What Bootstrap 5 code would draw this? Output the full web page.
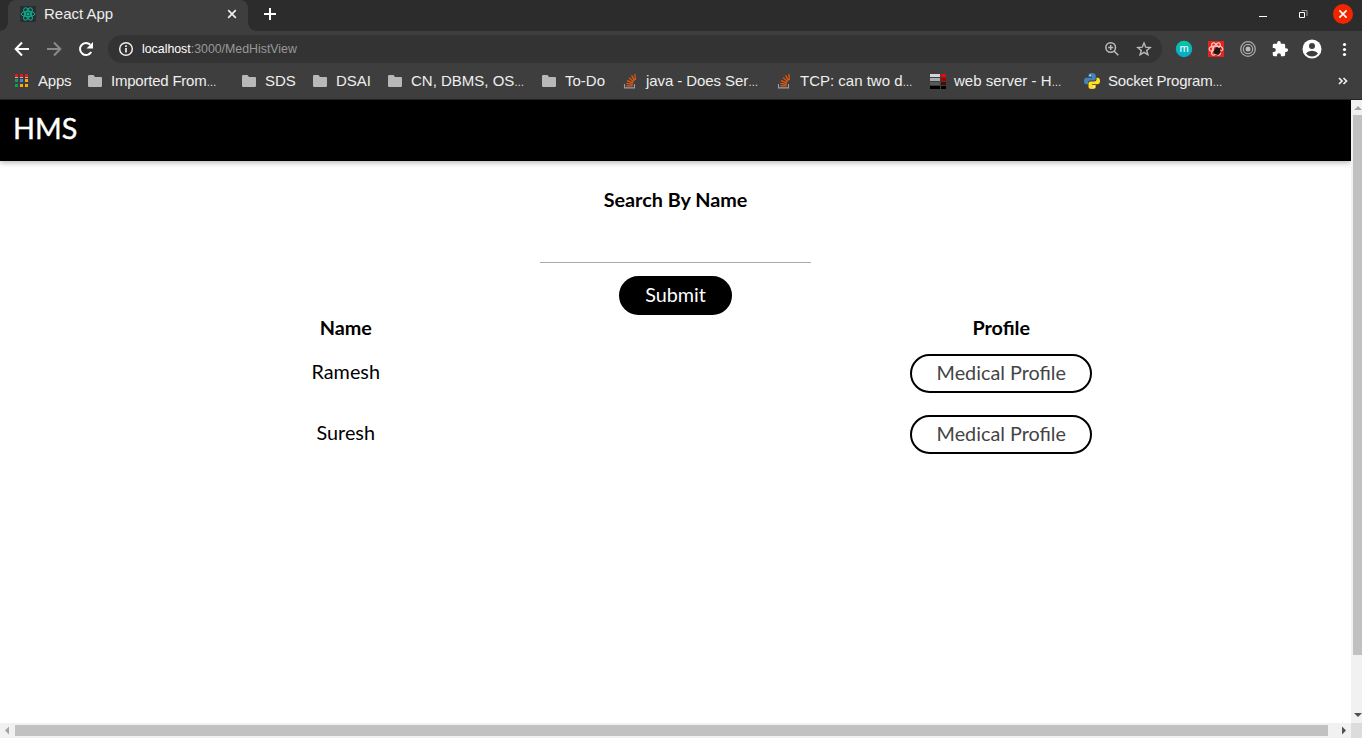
<!DOCTYPE html>
<html lang="en">
<head>
<meta charset="utf-8">
<title>React App</title>
<link rel="stylesheet" href="https://cdn.jsdelivr.net/npm/bootstrap@5.3.0/dist/css/bootstrap.min.css">
<style>
html,body{height:100%}
body{width:1362px;height:738px;font-family:"Liberation Sans",Arial,sans-serif;background:#fff;color:#000}
svg{display:block;flex:none}
/* browser window */
.tabstrip{height:31px;background:#2c2c2c;padding-left:8px}
.tab-active{width:240px;height:31px;background:#3e3e3e;border-radius:8px 8px 0 0;font-size:15px;line-height:18px;color:#eee;padding:0 10px 3px 12px}
.tab-active::before,.tab-active::after{content:"";position:absolute;bottom:0;width:8px;height:8px}
.tab-active::before{left:-8px;background:radial-gradient(circle at 0 0,transparent 7.5px,#3e3e3e 8px)}
.tab-active::after{right:-8px;background:radial-gradient(circle at 100% 0,transparent 7.5px,#3e3e3e 8px)}
.toolbar{height:35px;background:#3e3e3e;padding:0 10px 0 14px}
.omnibox{width:1054px;height:28px;border-radius:14px;background:#333;margin-left:14px;padding:0 10px;font-size:12.35px;color:#999}
.omnibox b{font-weight:400;color:#fff}
.url{padding-top:1px}
.bookmarks{height:34px;background:#3e3e3e;border-bottom:1px solid #242424;display:grid;grid-template-columns:73px 154px 71px 75px 154px 81px 154px 153px 154px 254px 1fr;padding:0 0 3px 15px;font-size:15px;line-height:20px;color:#eee}
.bookmarks>div{display:flex;align-items:center;white-space:nowrap}
.bookmarks svg{margin-right:7px;width:16px;height:16px}
.bookmarks i{font-style:normal;font-size:10px;padding-top:4px}
.tight{letter-spacing:-.22px}
.snug{letter-spacing:-.08px}
/* page */
.viewport{height:638px;display:grid;grid-template-columns:1351px 11px;grid-template-rows:623px 15px}
.page{font-family:Lato,sans-serif;font-size:19.8px;line-height:24px}
.topbar{height:61px;background:#000;box-shadow:0 2px 5px rgba(0,0,0,.26);padding:0 0 6px 13px}
.topbar span{font-size:28.8px;line-height:36px;color:#fff;-webkit-text-stroke:.4px #fff}
.line-input{width:271px;height:39px;border:0;border-bottom:1px solid #aaa;border-radius:0;background:none;padding:0;margin:13px 0 13px}
.pill{height:39px;border-radius:20px;border:2px solid #000;font-size:19.8px;line-height:24px;padding:4px 0 7px;color:#444;--bs-btn-font-family:Lato}
.pill-dark{background:#000;color:#fff;width:113px}
.pill-line{width:182px;background:#fff}
.records{width:1311px;margin-left:18px}
.records .line{height:61px}
.who{padding-top:5px}
.sb{background:#f1f1f1;overflow:hidden}
.thumb{background:#c1c1c1}
</style>
<script src="https://cdn.jsdelivr.net/npm/bootstrap@5.3.0/dist/js/bootstrap.bundle.min.js"></script>
</head>
<body class="overflow-hidden">
<svg width="0" height="0" class="position-absolute">
<symbol id="folder" viewBox="0 0 16 16"><path fill="#b8b8b8" d="M0 3.2Q0 2 1.2 2H5.5L7 4h6Q14 4 14 5v7.8Q14 14 12.8 14H1.2Q0 14 0 12.8z"/></symbol>
<symbol id="stack" viewBox="0 0 16 16"><path d="M1.5 11v3.9h10V11" fill="none" stroke="#9a9caa" stroke-width="1.1"/><path d="M3.3 12.900h6.400M3.400 10.400l6.400 .9M4 7.600l6 2.300M6 4.600l4.800 4.100M8.600 2.400l3 5.200M11.900 1l.5 6" stroke="#e8590c" stroke-width="1.2"/></symbol>
</svg>
<div class="tabstrip d-flex align-items-center">
 <div class="tab-active position-relative d-flex align-items-center">
  <svg width="16" height="16" viewBox="0 0 16 16"><path fill="#282c34" d="M0 0h16v16H0z"/><g fill="none" stroke="#08b58d" stroke-width="1"><ellipse cx="8" cy="8" rx="6.8" ry="2.7"/><ellipse cx="8" cy="8" rx="6.8" ry="2.7" transform="rotate(60 8 8)"/><ellipse cx="8" cy="8" rx="6.8" ry="2.7" transform="rotate(120 8 8)"/></g><circle cx="8" cy="8" r="1.5" fill="#08b58d"/></svg>
  <span class="ms-2 flex-grow-1">React App</span>
  <svg width="12" height="12" viewBox="0 0 12 12"><path d="M2.2 2.2l7.6 7.6M9.8 2.2L2.2 9.8" stroke="#eee" stroke-width="1.7"/></svg>
 </div>
 <svg class="ms-3" style="margin-bottom:3px" width="12" height="12" viewBox="0 0 12 12"><path d="M6 0v12M0 6h12" stroke="#fff" stroke-width="2"/></svg>
 <svg class="ms-auto" width="104" height="31" viewBox="0 0 104 31"><path d="M1 16.5h8" stroke="#fff"/><path d="M43.5 10.5h5.500v5.500" stroke="#999" fill="none"/><path d="M41.500 12.500h5v5h-5z" stroke="#fff" fill="none"/><circle cx="85" cy="14" r="10" fill="#f22500"/><path d="M81.400 10.400l7.200 7.200M88.600 10.400l-7.200 7.200" stroke="#fff" stroke-width="1.6"/></svg>
</div>
<div class="toolbar d-flex align-items-center">
 <svg width="16" height="16" viewBox="0 0 16 16"><path d="M15 8H2.5M8 1.500L1.700 8 8 14.500" fill="none" stroke="#fff" stroke-width="2"/></svg>
 <svg class="ms-3" width="16" height="16" viewBox="0 0 16 16"><path d="M1 8h12.500M8 1.500L14.300 8 8 14.500" fill="none" stroke="#8a8a8a" stroke-width="2"/></svg>
 <svg class="ms-3" width="16" height="16" viewBox="0 0 16 16"><path d="M13.200 11A6 6 0 1 1 12.300 3.800" fill="none" stroke="#fff" stroke-width="2"/><path fill="#fff" d="M15 1v6.500H8.500z"/></svg>
 <div class="omnibox d-flex align-items-center">
  <svg width="16" height="16" viewBox="0 0 16 16"><circle cx="8" cy="8" r="6.3" fill="none" stroke="#eee" stroke-width="1.5"/><path d="M8 7v4.600M8 4.300v1.700" stroke="#eee" stroke-width="1.7"/></svg>
  <span class="ms-2 url"><b>localhost</b>:3000/MedHistView</span>
  <svg class="ms-auto" width="16" height="16" viewBox="0 0 16 16"><circle cx="6.7" cy="6.5" r="4.8" fill="none" stroke="#bbb" stroke-width="1.5"/><path d="M10 10l4.300 4.300M6.700 4v5M4.200 6.500h5" stroke="#bbb" stroke-width="1.5"/></svg>
  <svg class="ms-3" width="16" height="16" viewBox="0 0 16 16"><path d="M8 2l1.700 4.200 4.500.3-3.500 2.900 1.200 4.400L8 11.400l-3.900 2.400 1.200-4.400L1.800 6.500l4.500-.3z" fill="none" stroke="#bbb" stroke-width="1.4"/></svg>
 </div>
 <svg width="190" height="32" viewBox="1162 33 190 32">
  <defs><linearGradient id="teal" x2="0" y2="1"><stop stop-color="#05c5a5"/><stop offset="1" stop-color="#08a9cf"/></linearGradient></defs>
  <circle cx="1184" cy="49" r="8.2" fill="url(#teal)"/><text x="1184" y="52" text-anchor="middle" font-size="11" fill="#fff">m</text>
  <path fill="#e8211b" d="M1208 41h16v16h-16z"/><g fill="none" stroke="#f7c5c2" stroke-width="1.3"><ellipse cx="1216" cy="49" rx="6.8" ry="2.8"/><ellipse cx="1216" cy="49" rx="6.8" ry="2.8" transform="rotate(60 1216 49)"/><ellipse cx="1216" cy="49" rx="6.8" ry="2.8" transform="rotate(120 1216 49)"/></g><path d="M1215 49l2-2 2 1 2-1-1 3 1 2-3 3-3-1-2-2z" fill="#251414"/>
  <g fill="none" stroke="#a8a8a8" stroke-width="1.3"><circle cx="1248" cy="49" r="7.3"/><circle cx="1248" cy="49" r="4.7"/></g><circle cx="1248" cy="49" r="2.5" fill="#bbb"/>
  <path fill="#fff" transform="translate(1271.3 40.2) scale(.73)" d="M20.500 11H19V7a2 2 0 0 0-2-2h-4V3.500a2.500 2.500 0 0 0-5 0V5H4a2 2 0 0 0-2 2v3.800h1.500a2.700 2.700 0 0 1 0 5.400H2V20a2 2 0 0 0 2 2h3.800v-1.500a2.700 2.700 0 0 1 5.400 0V22H17a2 2 0 0 0 2-2v-4h1.500a2.500 2.500 0 0 0 0-5z"/>
  <circle cx="1312" cy="49" r="9.5" fill="#fff"/><circle cx="1312" cy="46" r="3" fill="#3e3e3e"/><path fill="#3e3e3e" d="M1306 53.300q2-2.600 6-2.600t6 2.600q-2.300 3.200-6 3.200t-6-3.200z"/>
  <g fill="#fff"><circle cx="1344.5" cy="44.5" r="1.6"/><circle cx="1344.5" cy="49.5" r="1.6"/><circle cx="1344.5" cy="54.5" r="1.6"/></g>
 </svg>
</div>
<div class="bookmarks">
 <div><svg viewBox="0 0 16 16"><path fill="#f01414" d="M0 1h3v3H0zM5 1h3v3H5zM10 1h3v3h-3z"/><path fill="#bbb" d="M0 4h3v1H0zM5 4h3v1H5zM10 4h3v1h-3z"/><path fill="#0f9d58" d="M0 6h3v3H0zM0 11h3v3H0z"/><path fill="#4285f4" d="M5 6h3v3H5z"/><path fill="#fbac05" d="M10 6h3v3h-3zM5 11h3v3H5zM10 11h3v3h-3z"/></svg><span class="tight">Apps</span></div>
 <div><svg><use href="#folder"/></svg><span class="tight">Imported From</span><i>…</i></div>
 <div><svg><use href="#folder"/></svg>SDS</div>
 <div><svg><use href="#folder"/></svg>DSAI</div>
 <div><svg><use href="#folder"/></svg>CN, DBMS, OS<i>…</i></div>
 <div><svg><use href="#folder"/></svg>To-Do</div>
 <div><svg><use href="#stack"/></svg><span class="snug">java - Does Ser</span><i>…</i></div>
 <div><svg><use href="#stack"/></svg>TCP: can two d<i>…</i></div>
 <div><svg class="me-2" viewBox="0 0 16 16"><path fill="#d5d5d5" d="M0 1h10v3H0z"/><path fill="#aaa" d="M0 5h10v3H0z"/><path fill="#585858" d="M0 9h10v3H0z"/><path fill="#000" d="M0 13h10v3H0zM11 13h5v3h-5z"/><path fill="#f00" d="M11 1h5v3h-5z"/><path fill="#a80000" d="M11 5h5v3h-5z"/><path fill="#401010" d="M11 9h5v3h-5z"/></svg>web server - H<i>…</i></div>
 <div><svg class="me-2" viewBox="0 0 16 16"><path fill="#4584b6" d="M8 0C5 0 4.500 1 4.500 2.300V4H8v.7H2.500C1 4.700 0 5.800 0 8s1 3.300 2.300 3.300H4V9.500C4 8.300 5 7.500 6.200 7.500h3.600c1 0 1.900-.8 1.900-1.800V2.300C11.700 1 10.500 0 8 0z"/><path fill="#ffde25" d="M8 16c3 0 3.700-1 3.700-2.300V12H8v-.7h5.500C15 11.300 16 10.200 16 8s-1-3.300-2.300-3.300h-1.200v1.800c0 1.200-1.200 2-2.300 2H6.500c-1 0-2 .8-2 1.800v3.400C4.500 15 5.500 16 8 16z"/><circle cx="6.2" cy="2.2" r=".8" fill="#fff"/><circle cx="10" cy="13.8" r=".8" fill="#fff"/></svg><span class="tight">Socket Program</span><i>…</i></div>
 <div><svg viewBox="0 0 16 16"><path d="M1 5l3 3-3 3M5.500 5l3 3-3 3" fill="none" stroke="#eee" stroke-width="1.7"/></svg></div>
</div>
<div class="viewport">
 <main class="page">
  <header class="topbar d-flex align-items-center"><span>HMS</span></header>
  <div class="d-flex flex-column align-items-center" style="padding-top:26px">
   <label class="fw-bold" for="q">Search By Name</label>
   <input id="q" class="line-input">
   <button class="btn pill pill-dark">Submit</button>
  </div>
  <div class="records text-center">
   <div class="row g-0 fw-bold" style="padding:0 0 15px"><div class="col-6">Name</div><div class="col-6">Profile</div></div>
   <div class="row g-0 line"><div class="col-6 who">Ramesh</div><div class="col-6"><button class="btn pill pill-line">Medical Profile</button></div></div>
   <div class="row g-0 line"><div class="col-6 who">Suresh</div><div class="col-6"><button class="btn pill pill-line">Medical Profile</button></div></div>
  </div>
 </main>
 <div class="sb d-flex flex-column">
  <svg width="11" height="15"><path fill="#a3a3a3" d="M3 10h8L7 6z"/></svg>
  <div class="thumb" style="height:540px;margin-left:2px"></div>
  <svg class="mt-auto" width="11" height="15"><path fill="#505050" d="M3 5h8L7 9z"/></svg>
 </div>
 <div class="sb d-flex align-items-center">
  <svg width="15" height="15"><path fill="#a3a3a3" d="M9 3.500v8L5 7.500z"/></svg>
  <div class="thumb" style="width:1313px;height:11px"></div>
  <svg class="ms-auto" width="15" height="15"><path fill="#505050" d="M6 3.500v8l4-4z"/></svg>
 </div>
 <div style="background:#dcdcdc"></div>
</div>
</body>
</html>
